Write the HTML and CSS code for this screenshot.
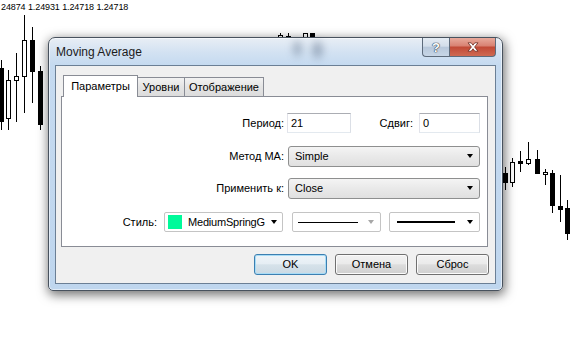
FILE: index.html
```html
<!DOCTYPE html>
<html lang="ru">
<head>
    <meta charset="UTF-8">
    <title>Moving Average</title>
    <link rel="stylesheet" href="styles.css">
</head>
<body>
<div class="chart">
    <div class="quote">24874 1.24931 1.24718 1.24718</div>
    <svg class="candles" width="570" height="341" viewBox="0 0 570 341">
        <g stroke="#000" stroke-width="1" shape-rendering="crispEdges">
            <!-- left side -->
            <line x1="1.5" y1="60" x2="1.5" y2="130"/>
            <rect x="0" y="68" width="4" height="54" fill="#000" stroke="none"/>
            <line x1="8.5" y1="70" x2="8.5" y2="130"/>
            <rect x="6.5" y="80.5" width="4" height="38" fill="#fff"/>
            <line x1="16.5" y1="53" x2="16.5" y2="122"/>
            <rect x="14.5" y="76.5" width="4" height="4" fill="#fff"/>
            <line x1="24.5" y1="15" x2="24.5" y2="113"/>
            <rect x="22.5" y="40.5" width="4" height="36" fill="#fff"/>
            <line x1="32.5" y1="27" x2="32.5" y2="103"/>
            <rect x="30" y="40" width="5" height="32" fill="#000" stroke="none"/>
            <line x1="40.5" y1="66" x2="40.5" y2="130"/>
            <rect x="38" y="71" width="5" height="54" fill="#000" stroke="none"/>
            <!-- above the dialog -->
            <line x1="280.5" y1="33" x2="280.5" y2="37"/>
            <rect x="278.5" y="35.5" width="4" height="6" fill="#fff"/>
            <line x1="288.5" y1="33" x2="288.5" y2="37"/>
            <rect x="286.5" y="36.5" width="4" height="5" fill="#fff"/>
            <rect x="303.5" y="33.5" width="4" height="6" fill="#fff"/>
            <rect x="310" y="33" width="5" height="6" fill="#000" stroke="none"/>
            <!-- right side -->
            <line x1="505.5" y1="167" x2="505.5" y2="190"/>
            <rect x="503" y="173" width="5" height="10" fill="#000" stroke="none"/>
            <line x1="512.5" y1="158" x2="512.5" y2="187"/>
            <rect x="510.5" y="162.5" width="4" height="20" fill="#fff"/>
            <line x1="520.5" y1="151" x2="520.5" y2="172"/>
            <rect x="518" y="161" width="5" height="3" fill="#000" stroke="none"/>
            <line x1="528.5" y1="142" x2="528.5" y2="165"/>
            <rect x="526.5" y="159.5" width="4" height="4" fill="#fff"/>
            <line x1="537.5" y1="150" x2="537.5" y2="174"/>
            <rect x="535" y="159" width="5" height="15" fill="#000" stroke="none"/>
            <line x1="545.5" y1="169" x2="545.5" y2="185"/>
            <rect x="543.5" y="172.5" width="4" height="2" fill="#fff"/>
            <line x1="552.5" y1="170" x2="552.5" y2="213"/>
            <rect x="550" y="173" width="5" height="33" fill="#000" stroke="none"/>
            <line x1="560.5" y1="175" x2="560.5" y2="222"/>
            <rect x="558" y="206" width="5" height="4" fill="#000" stroke="none"/>
            <line x1="567.5" y1="200" x2="567.5" y2="240"/>
            <rect x="565" y="208" width="5" height="26" fill="#000" stroke="none"/>
        </g>
    </svg>
</div>

<div class="window">
    <div class="titlebar">
        <span class="title">Moving Average</span>
        <div class="reflect"></div>
        <div class="caption-btns">
            <div class="cbtn help">?</div>
            <div class="cbtn close">
                <svg width="12" height="10" viewBox="0 0 12 10">
                    <path d="M1,0.8 L4.2,0.8 L6,3.2 L7.8,0.8 L11,0.8 L7.6,5 L11,9.2 L7.8,9.2 L6,6.8 L4.2,9.2 L1,9.2 L4.4,5 Z" fill="#fff" stroke="#6b2a1e" stroke-width="0.8"/>
                </svg>
            </div>
        </div>
    </div>
    <div class="client">
        <div class="tabs">
            <div class="tab active">Параметры</div>
            <div class="tab t-levels">Уровни</div>
            <div class="tab t-view">Отображение</div>
        </div>
        <div class="panel">
            <div class="row r1">
                <span class="lbl">Период:</span>
                <div class="edit period">21</div>
                <span class="lbl shift">Сдвиг:</span>
                <div class="edit shift-val">0</div>
            </div>
            <div class="row r2">
                <span class="lbl">Метод МА:</span>
                <div class="combo wide"><span class="val">Simple</span><i class="arrow"></i></div>
            </div>
            <div class="row r3">
                <span class="lbl">Применить к:</span>
                <div class="combo wide"><span class="val">Close</span><i class="arrow"></i></div>
            </div>
            <div class="row r4">
                <span class="lbl style-lbl">Стиль:</span>
                <div class="owner color-box">
                    <span class="swatch"></span>
                    <span class="color-name">MediumSpringG</span>
                    <i class="arrow"></i>
                </div>
                <div class="owner line-box">
                    <span class="sample thin"></span>
                    <i class="arrow off"></i>
                </div>
                <div class="owner width-box">
                    <span class="sample thick"></span>
                    <i class="arrow"></i>
                </div>
            </div>
        </div>
        <div class="buttons">
            <div class="btn default">OK</div>
            <div class="btn">Отмена</div>
            <div class="btn">Сброс</div>
        </div>
    </div>
</div>
</body>
</html>
```

FILE: styles.css
```css
*{
    margin: 0;
    padding: 0;
    box-sizing: border-box;
}
html,body{
    width: 570px;
    height: 341px;
    overflow: hidden;
}
body{
    background: #fff;
    font-family: "Liberation Sans", Arial, sans-serif;
    font-size: 11px;
    color: #000;
    position: relative;
}

/* chart behind the dialog */
.chart{
    width: 570px;
    height: 341px;
    position: relative;
}
.candles{
    display: block;
}
.quote{
    position: absolute;
    left: 1px;
    top: 2px;
    font-size: 9px;
    line-height: 10px;
    letter-spacing: -0.1px;
}

/* window frame */
.window{
    position: absolute;
    left: 48px;
    top: 37px;
    width: 455px;
    height: 254px;
    display: flex;
    flex-direction: column;
    padding: 0 6px 6px;
    border: 1px solid #48525e;
    border-radius: 7px 7px 5px 5px;
    background: linear-gradient(#e8eef5 0, #d3e2f2 14px, #c5daf0 27px, #bfd6ee 100%);
    box-shadow: inset 0 0 0 1px rgba(255,255,255,.55), 1px 3px 11px 1px rgba(0,0,0,.55);
}
.titlebar{
    height: 27px;
    flex: none;
    display: flex;
    align-items: center;
    justify-content: space-between;
    position: relative;
}
.title{
    font-size: 12px;
    color: #1b1b1b;
    padding-left: 1px;
    margin-top: 1px;
}
.reflect{
    position: absolute;
    left: 228px;
    top: 0;
    width: 48px;
    height: 26px;
    background: radial-gradient(ellipse 8px 12px at 30% 40%, rgba(45,65,95,.35), transparent),
                radial-gradient(ellipse 9px 13px at 72% 45%, rgba(45,65,95,.4), transparent);
    filter: blur(3px);
}
.caption-btns{
    align-self: flex-start;
    display: flex;
    position: relative;
}
.cbtn{
    height: 19px;
    display: flex;
    align-items: center;
    justify-content: center;
    border: 1px solid #5d6b7b;
    border-top: none;
}
.help{
    width: 27px;
    border-right: none;
    border-radius: 0 0 0 4px;
    background: linear-gradient(#e4ebf3 0, #d3deea 45%, #b8c8db 52%, #c7d6e6 100%);
    color: #fff;
    font-weight: bold;
    font-size: 13px;
    text-shadow: 0 0 1px #2b3a4c, 0 0 1px #2b3a4c, 0 0 1px #2b3a4c;
}
.close{
    width: 47px;
    border-radius: 0 0 4px 0;
    background: linear-gradient(#e8aa9c 0, #d98374 42%, #c24a37 52%, #cf6a52 100%);
}

/* client area */
.client{
    flex: 1;
    display: flex;
    flex-direction: column;
    background: #f0f0f0;
    border: 1px solid #6b7f95;
}
.tabs{
    display: flex;
    align-items: flex-start;
    height: 22px;
    margin: 9px 0 -1px 7px;
    position: relative;
    z-index: 1;
}
.tab{
    height: 19px;
    margin-top: 2px;
    border: 1px solid #898c95;
    border-bottom: none;
    background: linear-gradient(#f2f2f2, #e4e4e4 50%, #dcdcdc);
    text-align: center;
    line-height: 18px;
    color: #000;
}
.tab + .tab{
    margin-left: -1px;
}
.tab.active{
    height: 22px;
    margin-top: 0;
    width: 75px;
    background: #fff;
    line-height: 20px;
    position: relative;
    z-index: 2;
}
.t-levels{
    width: 48px;
}
.t-view{
    width: 80px;
}
.panel{
    height: 151px;
    margin: 0 7px 0 5px;
    padding: 16px 7px 0 0;
    border: 1px solid #898c95;
    background: #fff;
}

/* rows */
.row{
    display: flex;
    align-items: center;
    justify-content: flex-end;
    height: 20px;
}
.r1{
    margin-bottom: 13px;
}
.r2{
    margin-bottom: 12px;
}
.r3{
    margin-bottom: 14px;
}
.lbl{
    flex: 1;
    text-align: right;
    padding-right: 4px;
    color: #000;
}
.r1 .lbl:first-child{
    padding-right: 3px;
}
.lbl.shift{
    flex: none;
    width: 68px;
    padding-right: 6px;
}
.style-lbl{
    padding-right: 7px;
}
.edit{
    height: 20px;
    border: 1px solid;
    border-color: #abadb3 #dbdfe6 #e3e9ef #e2e3ea;
    background: #fff;
    padding-left: 3px;
    line-height: 18px;
}
.period{
    width: 64px;
}
.shift-val{
    width: 61px;
}
.combo{
    height: 21px;
    display: flex;
    align-items: center;
    border: 1px solid #8e8f8f;
    border-radius: 3px;
    background: linear-gradient(#f4f4f4, #e9e9e9 50%, #e0e0e0);
    padding: 0 6px 0 6px;
}
.combo.wide{
    width: 192px;
}
.combo .val{
    flex: 1;
}
.arrow{
    display: block;
    width: 0;
    height: 0;
    border-top: 4px solid #000;
    border-left: 3px solid transparent;
    border-right: 3px solid transparent;
    flex: none;
}
.arrow.off{
    border-top-color: #a7a7a7;
}

/* owner-drawn style combos */
.owner{
    height: 20px;
    display: flex;
    align-items: center;
    border: 1px solid #c4c4c4;
    border-radius: 2px;
    background: #fff;
}
.color-box{
    width: 119px;
    padding: 0 5px 0 3px;
}
.swatch{
    width: 14px;
    height: 14px;
    background: #00fa9a;
    flex: none;
}
.color-name{
    width: 82px;
    margin: 0 4px 0 6px;
    white-space: nowrap;
    letter-spacing: -0.2px;
}
.line-box{
    width: 89px;
    margin-left: 9px;
    padding: 0 6px 0 5px;
}
.width-box{
    width: 91px;
    margin-left: 8px;
    padding: 0 6px 0 7px;
}
.sample{
    display: block;
    background: #000;
    margin-right: auto;
}
.sample.thin{
    width: 60px;
    height: 1px;
}
.sample.thick{
    width: 58px;
    height: 2px;
}

/* buttons */
.buttons{
    display: flex;
    justify-content: flex-end;
    gap: 8px;
    margin: 7px 6px 0 0;
}
.btn{
    width: 73px;
    height: 21px;
    border: 1px solid #707070;
    border-radius: 3px;
    background: linear-gradient(#f2f2f2 0, #ebebeb 45%, #dddddd 52%, #cfcfcf 100%);
    box-shadow: inset 0 0 0 1px #fbfbfb;
    text-align: center;
    line-height: 19px;
}
.btn.default{
    border-color: #3c7fb1;
    background: linear-gradient(#eef4f8 0, #e6eef4 45%, #d6e2ea 52%, #cad9e3 100%);
    box-shadow: inset 0 0 0 1px #a8dcf6;
}
```
